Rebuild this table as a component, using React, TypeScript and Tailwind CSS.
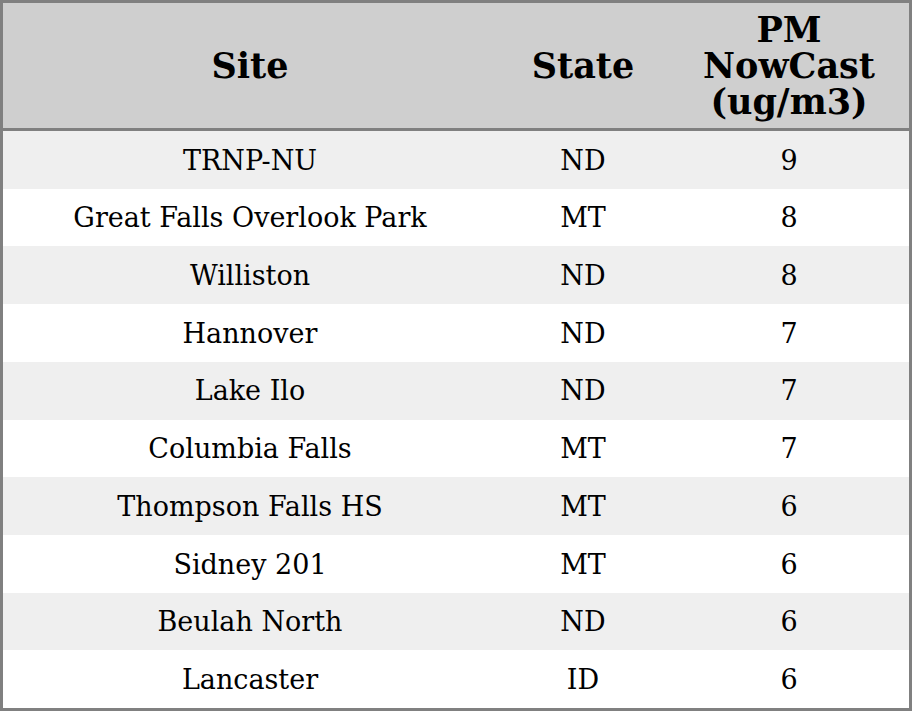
import React from 'react';

type Row = { site: string; state: string; pm: number };

const rows: Row[] = [
  { site: 'TRNP-NU', state: 'ND', pm: 9 },
  { site: 'Great Falls Overlook Park', state: 'MT', pm: 8 },
  { site: 'Williston', state: 'ND', pm: 8 },
  { site: 'Hannover', state: 'ND', pm: 7 },
  { site: 'Lake Ilo', state: 'ND', pm: 7 },
  { site: 'Columbia Falls', state: 'MT', pm: 7 },
  { site: 'Thompson Falls HS', state: 'MT', pm: 6 },
  { site: 'Sidney 201', state: 'MT', pm: 6 },
  { site: 'Beulah North', state: 'ND', pm: 6 },
  { site: 'Lancaster', state: 'ID', pm: 6 },
];

export default function App() {
  return (
    <div
      className="w-[912px] h-[711px] border-[3px] border-[#808080] flex flex-col text-black bg-white"
      style={{ fontFamily: '"DejaVu Serif", serif' }}
    >
      {/* header */}
      <div className="h-[128px] shrink-0 flex bg-[#cfcfcf] border-b-[3px] border-[#808080] text-[35px] font-bold leading-[36px] text-center">
        <div className="w-[494px] flex items-center justify-center">Site</div>
        <div className="w-[172px] flex items-center justify-center">State</div>
        <div className="flex-1 flex items-center justify-center">
          PM
          <br />
          NowCast
          <br />
          (ug/m3)
        </div>
      </div>

      {/* rows */}
      <div className="flex-1 flex flex-col text-[27px]">
        {rows.map((r, i) => (
          <div key={r.site} className={`flex-1 flex items-center pt-[2px] ${i % 2 === 0 ? 'bg-[#efefef]' : 'bg-white'}`}>
            <div className="w-[494px] text-center">{r.site}</div>
            <div className="w-[172px] text-center">{r.state}</div>
            <div className="flex-1 text-center">{r.pm}</div>
          </div>
        ))}
      </div>
    </div>
  );
}
